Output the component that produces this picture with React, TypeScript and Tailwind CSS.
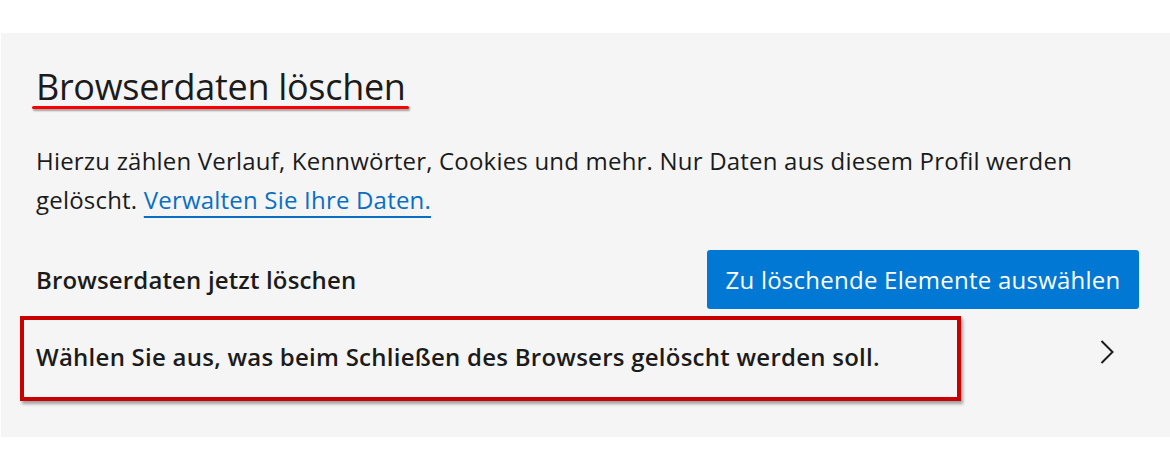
// Edge settings card — "Browserdaten löschen" with annotation marks (red underline + red frame).

const font = { fontFamily: '"Open Sans", "Noto Sans", sans-serif' };

function Chevron() {
  return (
    <svg width="14" height="24" viewBox="0 0 14 24" className="mr-[25px] -mt-[14px] text-[#1b1b1b]" fill="none">
      <polyline points="1.5,1 12.5,12 1.5,23" stroke="currentColor" strokeWidth="2" strokeLinejoin="miter" />
    </svg>
  );
}

export default function App() {
  return (
    <div className="h-[470px] w-[1170px] bg-white pl-[1px] pt-[33px] text-[#1b1b1b]" style={font}>
      <div className="h-[404px] bg-[#f5f5f5] pl-[35px] pr-[31px] pt-[32px]">
        <div className="relative inline-block">
          <h1 className="text-[36px] leading-[44px] font-normal tracking-[-0.3px]">Browserdaten löschen</h1>
          <div className="absolute -left-[4px] -right-[3px] top-[41px] h-[3px] rounded-full bg-[#ff0000] shadow-[1px_2px_2px_rgba(0,0,0,0.35)]" />
        </div>

        <p className="mt-[32px] max-w-[1070px] text-[24px] leading-[39px] tracking-[0.2px]">
          Hierzu zählen Verlauf, Kennwörter, Cookies und mehr. Nur Daten aus diesem Profil werden gelöscht.{' '}
          <a className="text-[#0a6fc4] underline decoration-[2px] underline-offset-[7px]">Verwalten Sie Ihre Daten.</a>
        </p>

        <div className="mt-[31px] flex items-center justify-between">
          <span className="text-[24px] font-[580] tracking-[0.15px]">Browserdaten jetzt löschen</span>
          <button className="h-[59px] w-[432px] rounded-[3px] bg-[#0078d4] text-[24px] text-white tracking-[0.25px]">
            Zu löschende Elemente auswählen
          </button>
        </div>

        <div className="relative mt-[7px] flex h-[85px] items-center justify-between">
          <span className="-mt-[4px] text-[24px] font-[580] tracking-[0.25px]">
            Wählen Sie aus, was beim Schließen des Browsers gelöscht werden soll.
          </span>
          <Chevron />
          <div className="absolute -left-[16px] top-0 h-[85px] w-[941px] border-[4px] border-[#c80000] shadow-[2px_3px_3px_rgba(0,0,0,0.35)]" />
        </div>
      </div>
    </div>
  );
}
